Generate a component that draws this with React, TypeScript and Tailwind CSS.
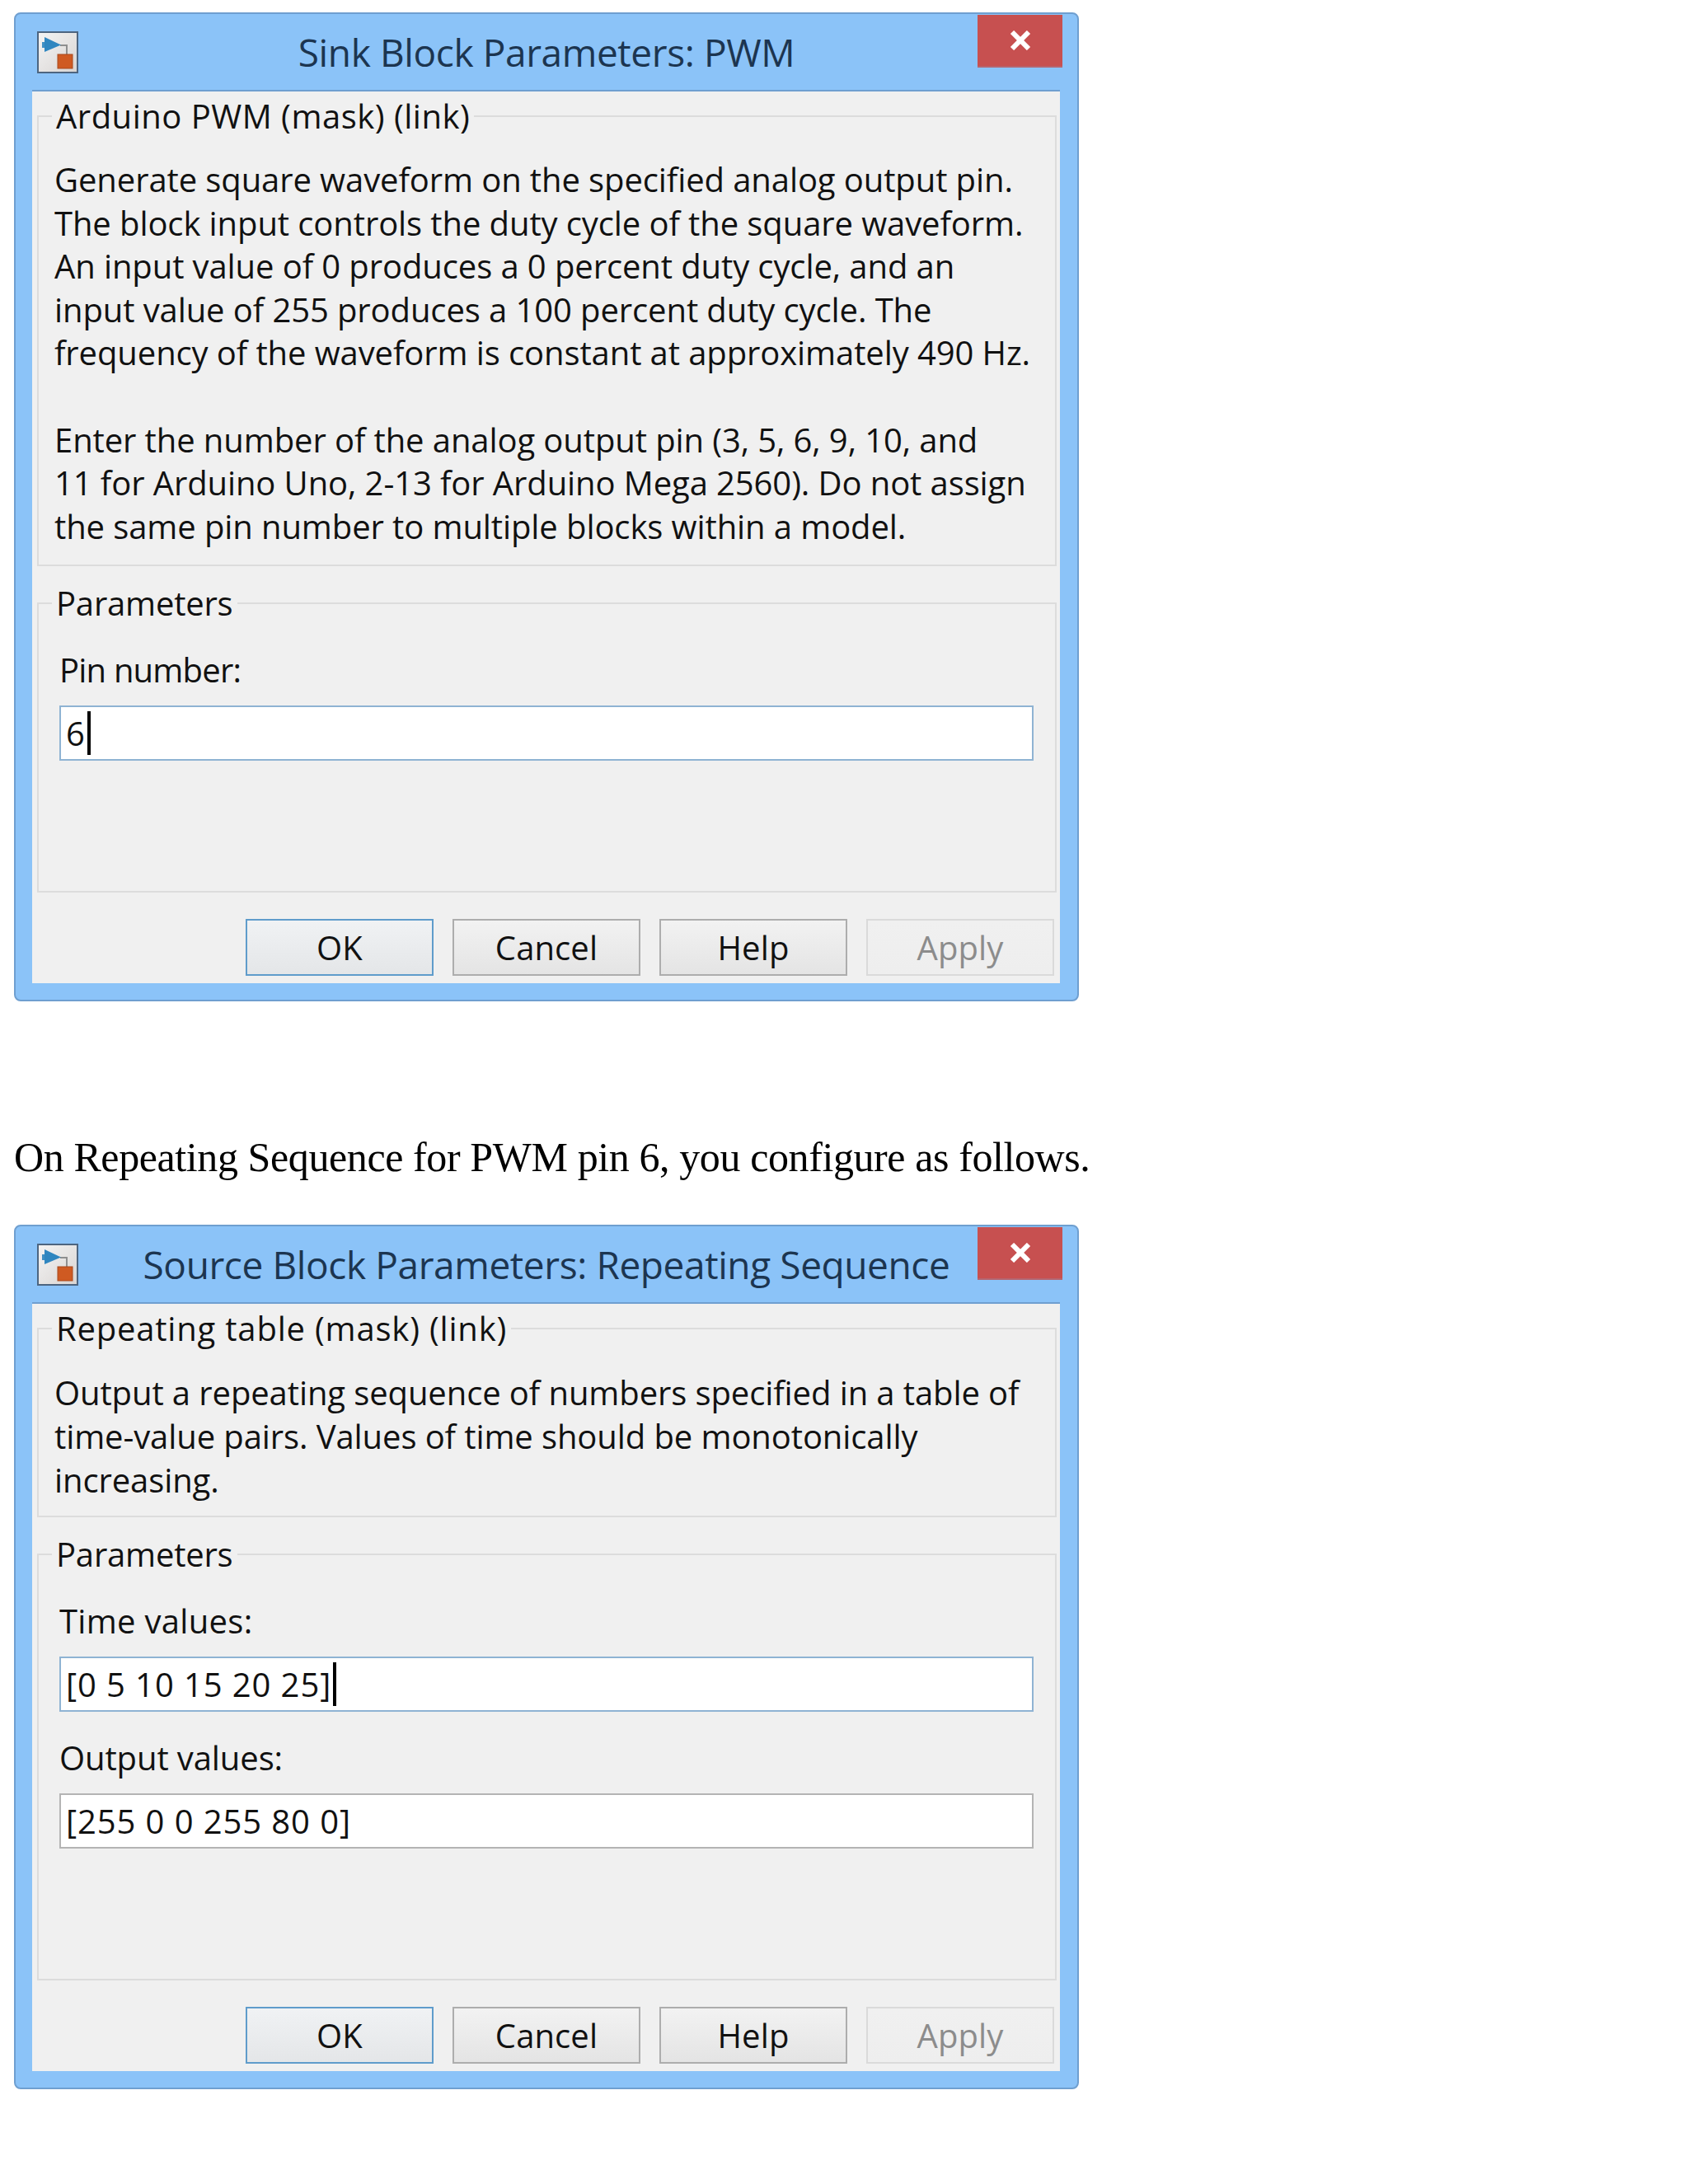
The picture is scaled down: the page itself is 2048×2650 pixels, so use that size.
function WindowIcon() {
  return (
    <svg width="50" height="51" viewBox="0 0 50 51" className="shrink-0">
      <defs>
        <linearGradient id="iconBg" x1="0" y1="0" x2="1" y2="1">
          <stop offset="0" stopColor="#f4f4f4" />
          <stop offset="1" stopColor="#d8d4d2" />
        </linearGradient>
      </defs>
      <rect x="1" y="1" width="48" height="49" fill="url(#iconBg)" stroke="#4d6580" strokeWidth="2" />
      <path d="M28 17H36V30" fill="none" stroke="#8f8f8f" strokeWidth="2" />
      <rect x="6" y="13" width="4" height="7" fill="#3f8fc4" />
      <path d="M9 7L29 16.5L9 25Z" fill="#2f86c0" />
      <rect x="25" y="28" width="18" height="17" fill="#cf5a22" stroke="#a8491c" />
    </svg>
  );
}

function Group({ title, track, pb, children }: { title: string; track: string; pb: string; children: React.ReactNode }) {
  return (
    <fieldset className={`ml-[6px] mr-[4px] border-2 border-[#dcdcdc] ${pb}`}>
      <legend className={`ml-[16px] px-[5px] text-[40px] leading-[48px] text-[#111] ${track}`}>{title}</legend>
      {children}
    </fieldset>
  );
}

function Field({ label, track, value, focused, caret }: { label: string; track: string; value: string; focused?: boolean; caret?: boolean }) {
  return (
    <div className="pl-[25px] pr-[26px]">
      <div className={`h-[44px] text-[40px] leading-[44px] text-[#111] mb-[21px] ${track}`}>{label}</div>
      <div
        className={`flex items-center h-[67px] border-2 bg-white pl-[6px] text-[40px] tracking-[0.9px] text-[#111] ${
          focused ? 'border-[#8fb3d3]' : 'border-[#b4b4b4]'
        }`}
      >
        <span>{value}</span>
        {caret && <span className="inline-block w-[4px] h-[53px] ml-[2px] bg-black" />}
      </div>
    </div>
  );
}

function DialogButton({ label, primary, disabled }: { label: string; primary?: boolean; disabled?: boolean }) {
  let look = 'border-[#adadad] from-[#f2f2f2] to-[#e4e4e4] text-[#111]';
  if (primary) look = 'border-[#5f9ccb] from-[#f0f2f4] to-[#e4e6e8] text-[#111]';
  if (disabled) look = 'border-[#dadada] from-[#f0f0f0] to-[#eeeeee] text-[#8c8c8c]';
  return (
    <div className={`flex items-center justify-center w-[228px] h-[69px] border-2 bg-gradient-to-b text-[40px] tracking-[0.1px] ${look}`}>
      {label}
    </div>
  );
}

function Dialog({ title, heading, track, pt, pb, text, children }: {
  title: string;
  heading: string;
  track: string;
  pt: string;
  pb: string;
  text: string[];
  children: React.ReactNode;
}) {
  return (
    <div className="relative w-[1292px] border-2 border-[#6f9fd0] rounded-[8px] bg-[#8bc3f8] font-['Open_Sans',sans-serif]">
      <div className="relative flex items-center h-[92px] pl-[26px]">
        <WindowIcon />
        <div className="absolute inset-x-0 top-[21px] text-center text-[46px] leading-[50px] tracking-[-0.4px] text-[#1c3550]">{title}</div>
      </div>
      <div className="absolute top-[1px] right-[18px] flex items-center justify-center w-[103px] h-[64px] bg-[#c75050] border-b-2 border-[#b5656f]">
        <svg width="28" height="24" viewBox="0 0 28 24">
          <path d="M4 2L24 22M24 2L4 22" stroke="#fff" strokeWidth="6" />
        </svg>
      </div>
      <div className="ml-[20px] mr-[21px] mb-[20px] border-t-2 border-[#6f9fd0] bg-[#f0f0f0] pt-[6px] pb-[9px]">
        <Group title={heading} track={track} pb={pb}>
          <div className={`${pt} pl-[19px] text-[40px] leading-[52.6px] tracking-[-0.1px] text-[#111]`}>
            {text.map((line, i) => (
              <div key={i} className="h-[52.6px] whitespace-nowrap">{line}</div>
            ))}
          </div>
        </Group>
        <div className="h-[21px]" />
        <Group title="Parameters" track="tracking-[-0.2px]" pb="pb-[158px]">
          <div className="pt-[35px] flex flex-col gap-[34px]">{children}</div>
        </Group>
        <div className="flex justify-end gap-[23px] pt-[32px] pr-[7px]">
          <DialogButton label="OK" primary />
          <DialogButton label="Cancel" />
          <DialogButton label="Help" />
          <DialogButton label="Apply" disabled />
        </div>
      </div>
    </div>
  );
}

export default function App() {
  return (
    <div className="min-h-[2650px] bg-white pl-[17px] pt-[15px]">
      <Dialog
        title="Sink Block Parameters: PWM"
        heading="Arduino PWM (mask) (link)"
        track="tracking-[0.5px]"
        pt="pt-[27px]"
        pb="pb-[20px]"
        text={[
          'Generate square waveform on the specified analog output pin.',
          'The block input controls the duty cycle of the square waveform.',
          'An input value of 0 produces a 0 percent duty cycle, and an',
          'input value of 255 produces a 100 percent duty cycle. The',
          'frequency of the waveform is constant at approximately 490 Hz.',
          '',
          'Enter the number of the analog output pin (3, 5, 6, 9, 10, and',
          '11 for Arduino Uno, 2-13 for Arduino Mega 2560). Do not assign',
          'the same pin number to multiple blocks within a model.',
        ]}
      >
        <Field label="Pin number:" track="tracking-[-0.8px]" value="6" focused caret />
      </Dialog>

      <p className="pt-[159px] pb-[52px] font-['Liberation_Serif',serif] text-[50px] leading-[60px] tracking-[-0.4px] text-black whitespace-nowrap">
        On Repeating Sequence for PWM pin 6, you configure as follows.
      </p>

      <Dialog
        title="Source Block Parameters: Repeating Sequence"
        heading="Repeating table (mask) (link)"
        track="tracking-[0.8px]"
        pt="pt-[28px]"
        pb="pb-[17px]"
        text={[
          'Output a repeating sequence of numbers specified in a table of',
          'time-value pairs. Values of time should be monotonically',
          'increasing.',
        ]}
      >
        <Field label="Time values:" track="tracking-[0.3px]" value="[0 5 10 15 20 25]" focused caret />
        <Field label="Output values:" track="tracking-[-0.1px]" value="[255 0 0 255 80 0]" />
      </Dialog>
    </div>
  );
}
